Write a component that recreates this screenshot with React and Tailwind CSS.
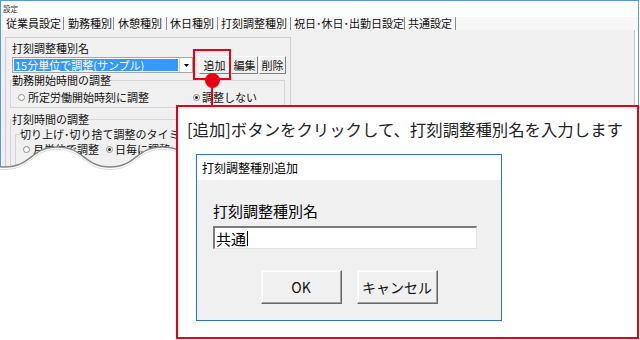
import React from "react";

const F = "font-['Noto_Sans_CJK_JP','Noto_Sans',sans-serif]";

function Radio({ checked }) {
  return (
    <span className="w-[7px] h-[7px] rounded-full border border-[#8a8a8a] bg-white flex items-center justify-center shrink-0">
      {checked && <span className="w-[3px] h-[3px] rounded-full bg-[#222]" />}
    </span>
  );
}

const tabs = [
  { label: "従業員設定", w: "w-[63px]", pl: "pl-[5px]" },
  { label: "勤務種別", w: "w-[50px]", pl: "pl-[4px]" },
  { label: "休憩種別", w: "w-[53px]", pl: "pl-[4px]" },
  { label: "休日種別", w: "w-[51px]", pl: "pl-[3px]" },
  { label: "打刻調整種別", w: "w-[73px]", pl: "pl-[3px]" },
  { label: "祝日･休日･出勤日設定", w: "w-[114px]", pl: "pl-[3px]" },
  { label: "共通設定", w: "w-[51px]", pl: "pl-[3px]" },
];

function SmallBtn({ children, w }) {
  return (
    <div
      className={`${w} h-[18px] bg-[#f0f0f0] border border-t-white border-l-white border-r-[#808080] border-b-[#808080] text-[11px] leading-none flex items-center justify-center`}
    >
      {children}
    </div>
  );
}

function DlgBtn({ children }) {
  return (
    <div className="w-[81px] h-[34px] bg-[#f0f0f0] border border-t-[#f8f8f8] border-l-[#f8f8f8] border-r-[#696969] border-b-[#696969] shadow-[inset_-1px_-1px_0_#a0a0a0,inset_1px_1px_0_#ffffff] text-[14px] leading-none flex items-center justify-center text-[#111]">
      {children}
    </div>
  );
}

export default function App() {
  return (
    <div className={`relative w-[640px] h-[340px] overflow-hidden bg-white text-black ${F}`}>
      {/* application window */}
      <div className="w-[639px] h-[185px] flex flex-col border-l border-t border-r border-[#5b9bd5]">
        <div className="h-[16px] bg-white pl-[2px] text-[7.5px] leading-[16px] text-[#333]">設定</div>
        <div className="h-[16px] bg-[#f7f7f7] flex items-center text-[11px] leading-none text-[#111]">
          {tabs.map((t, i) => (
            <span
              key={i}
              className={`${t.w} ${t.pl} h-[13px] border-r border-[#8c8c8c] flex items-center whitespace-nowrap`}
            >
              {t.label}
            </span>
          ))}
        </div>
        <div className="flex-1 bg-[#f0f0f0] pt-[7px] pl-[4px] mr-[3px] border-r border-[#c4c4c4] text-[#111]">
          <div className="w-[286px] h-[200px] border border-[#cfcfcf] px-[4px]">
            <div className="pl-[2px] pt-[4px] text-[11px] leading-[13px]">打刻調整種別名</div>
            <div className="h-[20px] flex items-center pl-[2px]">
              <div className="w-[181px] h-[16px] border border-[#a5a5a5] bg-white flex">
                <div className="flex-1 m-[1px] bg-[#3399ff] text-white text-[11px] leading-none pl-[1px] flex items-center whitespace-nowrap">
                  15分単位で調整(サンプル)
                </div>
                <div className="w-[13px] border-l border-[#d0d0d0] flex items-center justify-center">
                  <svg width="5" height="3" viewBox="0 0 5 3">
                    <path d="M0 0H5L2.5 3Z" fill="#000" />
                  </svg>
                </div>
              </div>
              <div className="ml-[6px] flex gap-[1px]">
                <SmallBtn w="w-[31px]">追加</SmallBtn>
                <SmallBtn w="w-[27px]">編集</SmallBtn>
                <SmallBtn w="w-[27px]">削除</SmallBtn>
              </div>
            </div>

            <fieldset className="-mt-[2px] w-[275px] border border-[#d5d5d5]">
              <legend className="ml-[1px] text-[11px] leading-[14px]">勤務開始時間の調整</legend>
              <div className="h-[14px] mt-[3px] mb-[3px] flex items-center text-[11px] leading-none">
                <div className="w-[182px] pl-[7px] flex items-center gap-[3px]">
                  <Radio />
                  所定労働開始時刻に調整
                </div>
                <div className="flex items-center gap-[2px]">
                  <Radio checked />
                  調整しない
                </div>
              </div>
            </fieldset>

            <fieldset className="mt-[4px] w-[275px] border border-[#d5d5d5] pb-[10px]">
              <legend className="ml-[1px] text-[11px] leading-[14px]">打刻時間の調整</legend>
              <fieldset className="mt-[1px] ml-[4px] w-[265px] border border-[#d5d5d5] pb-[10px]">
                <legend className="ml-[4px] text-[11px] leading-[14px] whitespace-nowrap">
                  切り上げ･切り捨て調整のタイミング
                </legend>
                <div className="h-[14px] mt-[1px] flex items-center text-[11px] leading-none">
                  <div className="w-[90px] pl-[7px] flex items-center gap-[3px] whitespace-nowrap">
                    <Radio />
                    月単位で調整
                  </div>
                  <div className="flex items-center gap-[2px] whitespace-nowrap">
                    <Radio checked />
                    日毎に調整
                  </div>
                </div>
              </fieldset>
            </fieldset>
          </div>
        </div>
      </div>

      {/* torn-edge wave */}
      <svg className="absolute left-0 top-[130px]" width="180" height="210" viewBox="0 0 180 210">
        <path
          d="M-50 17 C-22.5 17 -22.5 37 5 37 C31 37 31 17 57.5 17 C84 17 84 37 110 37 C136 37 136 17 162.5 17 C189 17 189 37 215 37 L215 210 L-50 210 Z"
          fill="#ffffff"
        />
        <path
          d="M-50 19.5 C-22.5 19.5 -22.5 39.5 5 39.5 C31 39.5 31 19.5 57.5 19.5 C84 19.5 84 39.5 110 39.5 C136 39.5 136 19.5 162.5 19.5 C189 19.5 189 39.5 215 39.5"
          fill="none"
          stroke="#dcdcdc"
          strokeWidth="1"
        />
        <path
          d="M-50 17 C-22.5 17 -22.5 37 5 37 C31 37 31 17 57.5 17 C84 17 84 37 110 37 C136 37 136 17 162.5 17 C189 17 189 37 215 37"
          fill="none"
          stroke="#858585"
          strokeWidth="1.5"
        />
      </svg>

      {/* highlight on 追加 */}
      <div className="absolute left-[193px] top-[49px] w-[38px] h-[31px] border-2 border-[#e60012]" />
      <div className="absolute left-[211px] top-[80px] w-[2px] h-[26px] bg-[#e60012]" />
      <div className="absolute left-[205px] top-[73px] w-[15px] h-[15px] rounded-full bg-[#e60012]" />

      {/* callout */}
      <div className="absolute left-[176px] top-[105px] w-[463px] h-[234px] border-2 border-[#e60012] bg-white">
        <div className="pl-[9px] pt-[10px] text-[16.4px] leading-[24px] text-[#222] whitespace-nowrap">
          [追加]ボタンをクリックして、打刻調整種別名を入力します
        </div>
        <div className="ml-[18px] mt-[13px] w-[306px] h-[167px] border border-[#2b74b8] flex flex-col">
          <div className="h-[25px] bg-white pl-[5px] flex items-center text-[12px] leading-none">打刻調整種別追加</div>
          <div className="flex-1 bg-[#f0f0f0]">
            <div className="pl-[16px] pt-[22px]">
              <div className="text-[15px] leading-[18px]">打刻調整種別名</div>
              <div className="mt-[6px] w-[264px] h-[23px] bg-white border-t-2 border-l-2 border-r border-b border-t-[#7a7a7a] border-l-[#7a7a7a] border-r-[#e3e3e3] border-b-[#e3e3e3] flex items-center pl-[1px] text-[15px] leading-none">
                共通
                <span className="w-[1px] h-[15px] bg-black ml-[1px]" />
              </div>
            </div>
            <div className="mt-[21px] flex justify-center gap-[15px]">
              <DlgBtn>OK</DlgBtn>
              <DlgBtn>キャンセル</DlgBtn>
            </div>
          </div>
        </div>
      </div>
    </div>
  );
}
